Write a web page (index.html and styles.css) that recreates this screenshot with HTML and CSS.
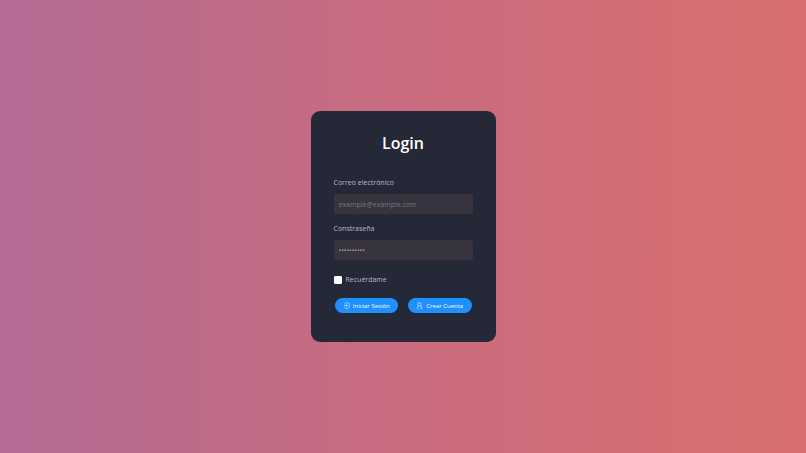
FILE: index.html
```
<!DOCTYPE html>
<html lang="es">
<head>
  <meta charset="UTF-8">
  <meta name="viewport" content="width=device-width, initial-scale=1.0">
  <title>Login</title>
  <link rel="stylesheet" href="styles.css">
</head>
<body>

<main class="card">
  <h1 class="title">Login</h1>

  <form class="form">
    <label class="label" for="email">Correo electrónico</label>
    <input class="input" type="email" id="email" placeholder="example@example.com">

    <label class="label" for="password">Constraseña</label>
    <input class="input" type="password" id="password" placeholder="••••••••••">

    <div class="remember">
      <input class="checkbox" type="checkbox" id="remember">
      <label class="remember-label" for="remember">Recuérdame</label>
    </div>

    <div class="buttons">
      <button class="btn" type="submit">
        <svg class="icon" viewBox="0 0 24 24" aria-hidden="true">
          <path d="M5 6a10 10 0 1 1 0 12"/>
          <path d="M3 12h12M11 8l4 4-4 4"/>
        </svg>
        Iniciar Sesión
      </button>
      <button class="btn" type="button">
        <svg class="icon" viewBox="0 0 24 24" aria-hidden="true">
          <circle cx="12" cy="8" r="6"/>
          <path d="M9 13c-4 2-5 5-5 9h4M15 13c4 2 5 5 5 9h-5"/>
        </svg>
        Crear Cuenta
      </button>
    </div>
  </form>
</main>

</body>
</html>
```
FILE: styles.css
```
* {
  box-sizing: border-box;
}

body {
  background: linear-gradient(to right, #b36a94, #c96c7f 50%, #d96f6f);
  display: flex;
  justify-content: center;
  align-items: center;
  min-height: 100vh;
  margin: 0;
  font-family: "Open Sans", "Noto Sans", sans-serif;
  font-size: 7px;
  color: #b9bac2;
}

.card {
  background-color: #252836;
  border-radius: 9px;
  width: 22%;
  min-width: 185px;
  padding: 20px 23px 29px;
}

.title {
  margin: 0 0 23px;
  font-size: 16px;
  line-height: 24px;
  font-weight: 600;
  text-align: center;
  color: #fff;
}

.form {
  display: flex;
  flex-direction: column;
}

.label {
  line-height: 10px;
  margin-bottom: 6px;
}

.input {
  width: 100%;
  height: 20px;
  margin: 0 0 10px;
  padding: 0 5px;
  border: none;
  border-radius: 2px;
  background-color: #37333f;
  color: #fff;
  font: inherit;
}

.input::placeholder {
  color: #77737c;
}

#password::placeholder {
  color: #a09da5;
}

.remember {
  display: flex;
  align-items: center;
  gap: 4px;
  margin: 5px 0 13px;
}

.checkbox {
  appearance: none;
  width: 8px;
  height: 8px;
  margin: 0;
  border: 1px solid #fff;
  border-radius: 1px;
  background-color: #fff;
}

.checkbox:checked {
  background-color: #1e90ff;
}

.remember-label {
  line-height: 10px;
}

.buttons {
  display: flex;
  gap: 10px;
  padding: 0 1px;
}

.btn {
  flex: 1;
  display: flex;
  justify-content: center;
  align-items: center;
  gap: 3px;
  height: 15px;
  padding: 0;
  border: none;
  border-radius: 8px;
  background-color: #1e90ff;
  color: #fff;
  font-family: inherit;
  font-size: 6px;
  white-space: nowrap;
  cursor: pointer;
}

.btn:hover {
  background-color: #187bdc;
}

.icon {
  width: 7px;
  height: 7px;
  fill: none;
  stroke: currentColor;
  stroke-width: 2;
}
```
